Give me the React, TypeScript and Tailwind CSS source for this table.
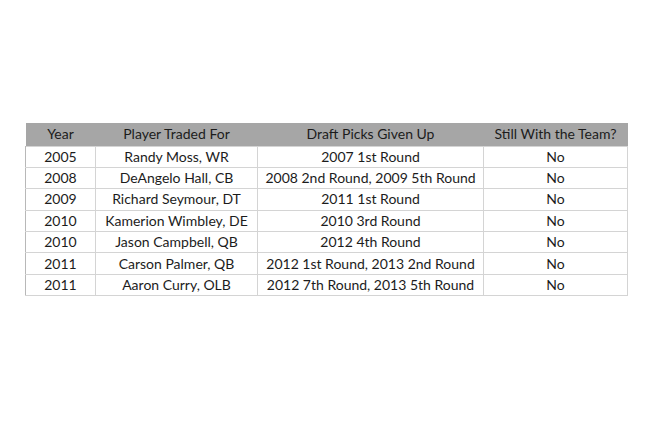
const ROWS = [
  ['2005', 'Randy Moss, WR', '2007 1st Round', 'No'],
  ['2008', 'DeAngelo Hall, CB', '2008 2nd Round, 2009 5th Round', 'No'],
  ['2009', 'Richard Seymour, DT', '2011 1st Round', 'No'],
  ['2010', 'Kamerion Wimbley, DE', '2010 3rd Round', 'No'],
  ['2010', 'Jason Campbell, QB', '2012 4th Round', 'No'],
  ['2011', 'Carson Palmer, QB', '2012 1st Round, 2013 2nd Round', 'No'],
  ['2011', 'Aaron Curry, OLB', '2012 7th Round, 2013 5th Round', 'No'],
];

const HEADERS = ['Year', 'Player Traded For', 'Draft Picks Given Up', 'Still With the Team?'];
const WIDTHS = ['w-[70px]', 'w-[162px]', 'w-[226px]', 'w-[144px]'];

export default function App() {
  return (
    <main className="h-[432px] w-[650px] bg-white pl-[25px] pt-[123px] font-['Lato',sans-serif] text-[14px] text-[#1c1c1c]">
      <table className="border-collapse">
        <thead>
          <tr className="h-[23px] bg-[#a6a6a6]">
            {HEADERS.map((h, i) => (
              <th key={h} className={`${WIDTHS[i]} p-0 text-center font-normal leading-none`}>
                {h}
              </th>
            ))}
          </tr>
        </thead>
        <tbody>
          {ROWS.map((row, r) => (
            <tr key={r} className="h-[21.4px]">
              {row.map((cell, i) => (
                <td
                  key={i}
                  className={`${WIDTHS[i]} border border-[#d4d4d4] p-0 text-center leading-none ${i === 0 ? 'border-l-[#b8b8b8]' : ''}`}
                >
                  {cell}
                </td>
              ))}
            </tr>
          ))}
        </tbody>
      </table>
    </main>
  );
}
